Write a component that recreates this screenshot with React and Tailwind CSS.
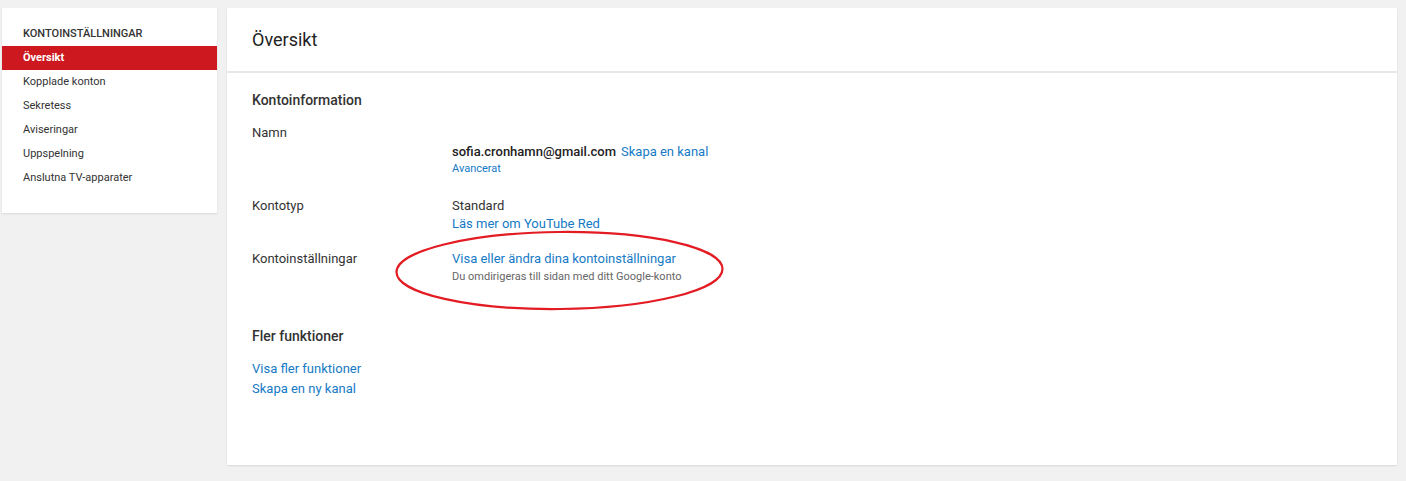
import React from "react";

const menu = ["Översikt", "Kopplade konton", "Sekretess", "Aviseringar", "Uppspelning", "Anslutna TV-apparater"];

const Sidebar = () => (
    <div className="w-[215px] shrink-0 self-start bg-white shadow-[0_1px_2px_rgba(0,0,0,0.1)] pt-[18px] pb-[23px]">
        <div className="px-[21px] text-[11px] leading-[16px] font-medium uppercase text-[#333] mb-[4px]">
            Kontoinställningar
        </div>
        {menu.map((item, i) => (
            <div
                key={item}
                className={
                    i === 0
                        ? "h-6 flex items-center px-[21px] text-[11px] font-bold text-white bg-[#cc181e]"
                        : "h-6 flex items-center px-[21px] text-[11px] text-[#333]"
                }
            >
                {item}
            </div>
        ))}
    </div>
);

const Row = ({label, children, className}) => (
    <div className={"flex " + (className || "")}>
        <div className="w-[200px] shrink-0 text-[13px] leading-[18px] text-[#333]">{label}</div>
        <div className="flex-1">{children}</div>
    </div>
);

const App = () => {
    return (
        <div className="min-h-screen bg-[#f1f1f1] flex gap-[10px] pt-2 pl-[2px] pr-[9px] font-['Roboto',_'Liberation_Sans',_sans-serif]">
            <Sidebar/>
            <div className="relative flex-1 h-[457px] bg-white shadow-[0_1px_2px_rgba(0,0,0,0.1)]">
                <div className="h-[65px] flex items-center px-[25px] border-b-2 border-[#e8e8e8]">
                    <h1 className="text-[18px] text-[#222]">Översikt</h1>
                </div>
                <div className="px-[25px] pt-[17px]">
                    <h2 className="text-[14px] leading-[20px] font-medium text-[#333]">Kontoinformation</h2>
                    <Row label="Namn" className="mt-[14px]">
                        <div className="pt-[19px]">
                            <div className="text-[13px] leading-[18px]">
                                <span className="font-medium text-[#222]">sofia.cronhamn@gmail.com</span>
                                <a className="ml-[5px] text-[#167ac6]">Skapa en kanal</a>
                            </div>
                            <div className="text-[11px] leading-[15px] text-[#167ac6]">Avancerat</div>
                        </div>
                    </Row>
                    <Row label="Kontotyp" className="mt-[21px]">
                        <div className="text-[13px] leading-[18px] text-[#333]">Standard</div>
                        <a className="block text-[13px] leading-[18px] text-[#167ac6]">Läs mer om YouTube Red</a>
                    </Row>
                    <Row label="Kontoinställningar" className="mt-[17px]">
                        <a className="block text-[13px] leading-[18px] text-[#167ac6]">Visa eller ändra dina kontoinställningar</a>
                        <div className="text-[11px] leading-[15px] text-[#666] mt-[1px]">Du omdirigeras till sidan med ditt Google-konto</div>
                    </Row>
                    <h2 className="mt-[42px] text-[14px] leading-[20px] font-medium text-[#333]">Fler funktioner</h2>
                    <div className="mt-[13px] text-[13px] leading-[20px] text-[#167ac6]">
                        <a className="block">Visa fler funktioner</a>
                        <a className="block">Skapa en ny kanal</a>
                    </div>
                </div>
                <svg className="absolute left-[167px] top-[221px] w-[334px] h-[84px] pointer-events-none" viewBox="0 0 334 84" fill="none">
                    <ellipse cx="165.5" cy="41.5" rx="163" ry="38.5" transform="rotate(-0.6 165.5 41.5)" stroke="#e31b23" strokeWidth="2.2"/>
                </svg>
            </div>
        </div>
    );
};

export default App;
